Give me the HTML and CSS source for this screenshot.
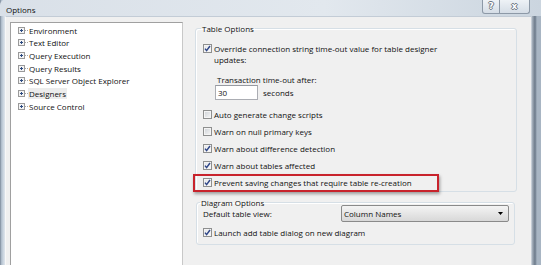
FILE: index.html
```html
<!DOCTYPE html>
<html lang="en">
<head>
    <meta charset="UTF-8">
    <title>Options</title>
    <link rel="stylesheet" href="styles.css">
</head>
<body>
    <div class="window">
        <div class="titlebar">
            <span class="title">Options</span>
            <div class="caption-buttons">
                <span class="cap-btn help">?</span>
                <span class="cap-btn close">x</span>
            </div>
        </div>
        <div class="frame">
            <div class="edge-left"></div>
            <div class="client">
                <ul class="tree">
                    <li><svg class="expander" width="11" height="7" viewBox="0 0 11 7"><rect x="0.5" y="0.5" width="6" height="6" fill="#f4f4f4" stroke="#9a9a9a"/><path d="M2 3.5h3M3.5 2v3" stroke="#2c4a80"/><path d="M7 3.5h4" stroke="#a8a8a8" stroke-dasharray="1 1"/></svg>Environment</li>
                    <li><svg class="expander" width="11" height="7" viewBox="0 0 11 7"><rect x="0.5" y="0.5" width="6" height="6" fill="#f4f4f4" stroke="#9a9a9a"/><path d="M2 3.5h3M3.5 2v3" stroke="#2c4a80"/><path d="M7 3.5h4" stroke="#a8a8a8" stroke-dasharray="1 1"/></svg>Text Editor</li>
                    <li><svg class="expander" width="11" height="7" viewBox="0 0 11 7"><rect x="0.5" y="0.5" width="6" height="6" fill="#f4f4f4" stroke="#9a9a9a"/><path d="M2 3.5h3M3.5 2v3" stroke="#2c4a80"/><path d="M7 3.5h4" stroke="#a8a8a8" stroke-dasharray="1 1"/></svg>Query Execution</li>
                    <li><svg class="expander" width="11" height="7" viewBox="0 0 11 7"><rect x="0.5" y="0.5" width="6" height="6" fill="#f4f4f4" stroke="#9a9a9a"/><path d="M2 3.5h3M3.5 2v3" stroke="#2c4a80"/><path d="M7 3.5h4" stroke="#a8a8a8" stroke-dasharray="1 1"/></svg>Query Results</li>
                    <li><svg class="expander" width="11" height="7" viewBox="0 0 11 7"><rect x="0.5" y="0.5" width="6" height="6" fill="#f4f4f4" stroke="#9a9a9a"/><path d="M2 3.5h3M3.5 2v3" stroke="#2c4a80"/><path d="M7 3.5h4" stroke="#a8a8a8" stroke-dasharray="1 1"/></svg>SQL Server Object Explorer</li>
                    <li><svg class="expander" width="11" height="7" viewBox="0 0 11 7"><rect x="0.5" y="0.5" width="6" height="6" fill="#f4f4f4" stroke="#9a9a9a"/><path d="M2 3.5h3M3.5 2v3" stroke="#2c4a80"/><path d="M7 3.5h4" stroke="#a8a8a8" stroke-dasharray="1 1"/></svg><span class="selected">Designers</span></li>
                    <li><svg class="expander" width="11" height="7" viewBox="0 0 11 7"><rect x="0.5" y="0.5" width="6" height="6" fill="#f4f4f4" stroke="#9a9a9a"/><path d="M2 3.5h3M3.5 2v3" stroke="#2c4a80"/><path d="M7 3.5h4" stroke="#a8a8a8" stroke-dasharray="1 1"/></svg>Source Control</li>
                </ul>

                <div class="pages">
                    <fieldset class="group table-options">
                        <legend>Table Options</legend>

                        <div class="check-row wrap">
                            <span class="check on"><svg width="7" height="7" viewBox="0 0 7 7"><path d="M1 3.6l1.6 2L6 1" fill="none" stroke="#2f4687" stroke-width="1.5"/></svg></span>
                            <span class="label">Override connection string time-out value for table designer<br>updates:</span>
                        </div>

                        <div class="timeout-label">Transaction time-out after:</div>
                        <div class="timeout-row">
                            <span class="textbox">30</span>
                            <span>seconds</span>
                        </div>

                        <div class="check-row">
                            <span class="check"></span>
                            <span class="label">Auto generate change scripts</span>
                        </div>
                        <div class="check-row">
                            <span class="check"></span>
                            <span class="label">Warn on null primary keys</span>
                        </div>
                        <div class="check-row">
                            <span class="check on"><svg width="7" height="7" viewBox="0 0 7 7"><path d="M1 3.6l1.6 2L6 1" fill="none" stroke="#2f4687" stroke-width="1.5"/></svg></span>
                            <span class="label">Warn about difference detection</span>
                        </div>
                        <div class="check-row">
                            <span class="check on"><svg width="7" height="7" viewBox="0 0 7 7"><path d="M1 3.6l1.6 2L6 1" fill="none" stroke="#2f4687" stroke-width="1.5"/></svg></span>
                            <span class="label">Warn about tables affected</span>
                        </div>
                        <div class="check-row highlight">
                            <span class="check on"><svg width="7" height="7" viewBox="0 0 7 7"><path d="M1 3.6l1.6 2L6 1" fill="none" stroke="#2f4687" stroke-width="1.5"/></svg></span>
                            <span class="label">Prevent saving changes that require table re-creation</span>
                        </div>
                    </fieldset>

                    <fieldset class="group diagram-options">
                        <legend>Diagram Options</legend>
                        <div class="view-row">
                            <span>Default table view:</span>
                            <span class="combo">Column Names<svg width="5" height="3" viewBox="0 0 5 3"><path d="M0 0h5L2.5 3z" fill="#000"/></svg></span>
                        </div>
                        <div class="check-row">
                            <span class="check on"><svg width="7" height="7" viewBox="0 0 7 7"><path d="M1 3.6l1.6 2L6 1" fill="none" stroke="#2f4687" stroke-width="1.5"/></svg></span>
                            <span class="label">Launch add table dialog on new diagram</span>
                        </div>
                    </fieldset>
                </div>
            </div>
            <div class="edge-right"></div>
        </div>
    </div>
</body>
</html>
```

FILE: styles.css
```css
body {
    margin: 0;
    font-family: "Open Sans", "Noto Sans", sans-serif;
    font-size: 8px;
    color: #111111;
    background-color: #ffffff;
}

.window {
    width: 541px;
    height: 265px;
    overflow: hidden;
    display: flex;
    flex-direction: column;
    background: linear-gradient(to right, #6f7d8d 0, #a9b7c6 1px, #c8d3de 3px, #dfe5ec 5px, #dfe5ec 531px, #aab4bf 532px, #6b7989 535px, #a8b5c3 537px);
}

/* title bar */

.titlebar {
    height: 19px;
    display: flex;
    justify-content: space-between;
    align-items: flex-start;
    background: linear-gradient(to right, #d9e0e8, #e2e8ee 60%, #cbd5df);
    border-top-left-radius: 5px;
}

.title {
    margin: 4px 0 0 6px;
    line-height: 12px;
}

.caption-buttons {
    display: flex;
    margin-right: 11px;
}

.cap-btn {
    height: 13px;
    line-height: 12px;
    text-align: center;
    border: 1px solid #8d99a7;
    border-top: none;
    background: linear-gradient(#eef2f6, #d5dde6);
    color: #ffffff;
    font-family: "DejaVu Sans", sans-serif;
    font-size: 9px;
    font-weight: bold;
    text-shadow: 1px 0 0 #6a7480, -1px 0 0 #6a7480, 0 1px 0 #6a7480, 0 -1px 0 #6a7480;
}

.help {
    width: 16px;
    border-bottom-left-radius: 3px;
}

.close {
    width: 29px;
    border-left: none;
    border-bottom-right-radius: 3px;
}

/* frame and client */

.frame {
    flex: 1;
    display: flex;
}

.edge-left {
    width: 5px;
}

.edge-right {
    width: 10px;
}

.client {
    flex: 1;
    display: flex;
    align-items: flex-start;
    background-color: #f0f0f0;
    border-top: 1px solid #c3ccd6;
    border-left: 1px solid #f8f8f8;
    padding: 5px 0 0 4px;
}

/* tree */

.tree {
    list-style: none;
    margin: 0;
    padding: 1px 0 0 7px;
    width: 164px;
    height: 260px;
    background-color: #ffffff;
    border: 1px solid #a0a0a0;
    border-right-color: #c8c8c8;
}

.tree li {
    display: flex;
    align-items: center;
    height: 12.65px;
    white-space: nowrap;
}

.expander {
    flex-shrink: 0;
}

.selected {
    background-color: #ececec;
    padding: 0 1px;
    margin-left: -1px;
}

/* option pages */

.pages {
    margin: 1px 0 0 12px;
    width: 322px;
}

.group {
    margin: 0;
    padding: 0 0 0 7px;
    border: 1px solid #d6dfe6;
    border-radius: 3px;
    box-shadow: inset 1px 1px 0 #ffffff;
}

.group legend {
    padding: 0 1px;
    margin-left: -2px;
    line-height: 11.5px;
}

.table-options {
    padding-top: 8px;
}

.diagram-options {
    margin: 5px 2px 0 1px;
    padding-left: 6px;
    padding-bottom: 2.5px;
}

.diagram-options legend {
    margin-left: -3px;
}

.check-row {
    display: flex;
    align-items: center;
    height: 17px;
    white-space: nowrap;
}

.check-row.wrap {
    align-items: flex-start;
    height: auto;
    line-height: 11.3px;
}

.check-row.wrap .check {
    margin-top: 1.5px;
}

.check {
    width: 7px;
    height: 7px;
    flex-shrink: 0;
    display: flex;
    border: 1px solid #8e8f8f;
    box-shadow: inset 0 0 0 1px #f4f4f4;
    background: linear-gradient(135deg, #cdd1d6, #f7f7f7);
    margin-right: 2px;
}

.check.on {
    background: linear-gradient(135deg, #e2e4e8, #fbfbfb);
}

.highlight {
    position: relative;
}

.highlight::after {
    content: "";
    position: absolute;
    left: -10px;
    top: 0;
    width: 242px;
    height: 14px;
    border: 2px solid #c8232c;
    box-shadow: 1px 2px 3px rgba(0, 0, 0, 0.35);
}

.timeout-label {
    margin: 8.5px 0 0 14px;
    line-height: 11.5px;
}

.timeout-row {
    display: flex;
    align-items: center;
    margin-left: 12px;
}

.textbox {
    width: 39px;
    height: 13px;
    line-height: 13px;
    padding-left: 2px;
    margin-right: 5px;
    background-color: #ffffff;
    border: 1px solid #abadb3;
    border-top-color: #979aa1;
}

.timeout-row + .check-row {
    margin-top: 5.5px;
}

.view-row {
    display: flex;
    align-items: center;
    justify-content: space-between;
    height: 17px;
    margin-top: -3px;
}

.view-row + .check-row {
    margin-top: 2.4px;
}

.combo {
    width: 159px;
    height: 15px;
    display: flex;
    align-items: center;
    justify-content: space-between;
    padding: 0 5px 0 2px;
    margin-right: 5px;
    border: 1px solid #8a8a8a;
    border-radius: 2px;
    background: linear-gradient(#f4f4f4, #e6e6e6 50%, #d8d8d8);
}
```
